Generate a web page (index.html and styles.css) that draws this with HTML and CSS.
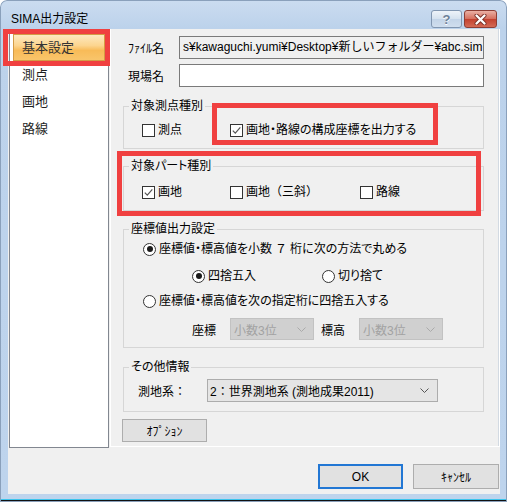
FILE: index.html
```html
<!DOCTYPE html>
<html lang="ja">
<head>
<meta charset="utf-8">
<title>SIMA出力設定</title>
<link rel="stylesheet" href="styles.css">
</head>
<body>
<div class="window">
  <div class="titlebar">
    <span class="title">SIMA出力設定</span>
    <div class="tbtns">
      <span class="tbtn help">?</span>
      <span class="tbtn close"><svg width="15" height="11" viewBox="0 0 15 11"><path d="M3.5 1.5 L11.5 9.5 M11.5 1.5 L3.5 9.5" stroke="#7a3027" stroke-width="4" stroke-linecap="round"/><path d="M3.5 1.5 L11.5 9.5 M11.5 1.5 L3.5 9.5" stroke="#fff" stroke-width="2.3" stroke-linecap="round"/></svg></span>
    </div>
  </div>
  <div class="client">
    <div class="main">
      <ul class="nav">
        <li class="sel">基本設定<span class="mark mark-nav"></span></li>
        <li>測点</li>
        <li>画地</li>
        <li>路線</li>
      </ul>
      <div class="panel">
        <div class="row"><label>ﾌｧｲﾙ名</label><div class="input ro">s¥kawaguchi.yumi¥Desktop¥新しいフォルダー¥abc.sim</div></div>
        <div class="row"><label>現場名</label><div class="input"></div></div>

        <div class="grp g1">
          <div class="gtitle">対象測点種別</div>
          <div class="opts">
            <span class="chk w88"><i class="box"></i>測点</span>
            <span class="chk marked"><i class="box"><svg width="11" height="11" viewBox="0 0 11 11"><polyline points="1.8,5.6 4.3,8.2 9.3,2.4" fill="none" stroke="#555" stroke-width="1.2"/></svg></i>画地・路線の構成座標を出力する<span class="mark mark-chk"></span></span>
          </div>
        </div>

        <div class="grp g2">
          <div class="gtitle">対象パート種別</div>
          <div class="opts">
            <span class="chk w88"><i class="box"><svg width="11" height="11" viewBox="0 0 11 11"><polyline points="1.8,5.6 4.3,8.2 9.3,2.4" fill="none" stroke="#555" stroke-width="1.2"/></svg></i>画地</span>
            <span class="chk w130 full"><i class="box"></i>画地（三斜）</span>
            <span class="chk"><i class="box"></i>路線</span>
          </div>
          <span class="mark mark-grp"></span>
        </div>

        <div class="grp g3">
          <div class="gtitle">座標値出力設定</div>
          <div class="rad"><i class="dot on"></i>座標値・標高値を小数<span class="full">７</span>桁に次の方法で丸める</div>
          <div class="sub">
            <div class="rad w130"><i class="dot on"></i>四捨五入</div>
            <div class="rad"><i class="dot"></i>切り捨て</div>
          </div>
          <div class="rad"><i class="dot"></i>座標値・標高値を次の指定桁に四捨五入する</div>
          <div class="digits">
            <span class="lbl">座標</span>
            <span class="combo dis">小数3位<svg width="9" height="5" viewBox="0 0 9 5"><polyline points="0.5,0.5 4.5,4.5 8.5,0.5" fill="none" stroke="#aaa"/></svg></span>
            <span class="lbl lbl2">標高</span>
            <span class="combo dis">小数3位<svg width="9" height="5" viewBox="0 0 9 5"><polyline points="0.5,0.5 4.5,4.5 8.5,0.5" fill="none" stroke="#aaa"/></svg></span>
          </div>
        </div>

        <div class="grp g4">
          <div class="gtitle">その他情報</div>
          <div class="geo">
            <span class="lbl-geo">測地系：</span>
            <span class="combo norm">2：世界測地系 (測地成果2011)<svg width="9" height="5" viewBox="0 0 9 5"><polyline points="0.5,0.5 4.5,4.5 8.5,0.5" fill="none" stroke="#555"/></svg></span>
          </div>
        </div>

        <div class="btn opt">ｵﾌﾟｼｮﾝ</div>
      </div>
    </div>
    <div class="bottom">
      <div class="btn ok">OK</div>
      <div class="btn cancel">ｷｬﾝｾﾙ</div>
    </div>
  </div>
</div>
</body>
</html>
```

FILE: styles.css
```css
* { box-sizing: border-box; }
html, body { margin: 0; padding: 0; }
body {
  width: 507px;
  height: 502px;
  overflow: hidden;
  font-family: "Liberation Sans", "Noto Sans CJK JP", sans-serif;
  font-size: 12px;
  color: #000;
  background: #fff;
  font-feature-settings: "palt";
}

.window {
  width: 507px;
  height: 502px;
  display: flex;
  flex-direction: column;
  border-radius: 7px 7px 0 0;
  background:
    linear-gradient(to top, #111 0 2px, #3cc4ec 2px 3px, transparent 3px),
    linear-gradient(#cbdcf0, #bcd2eb 28px, #bed4ed);
  box-shadow: inset 0 0 0 1px #8aa0bb;
}

/* title bar */
.titlebar {
  flex: none;
  height: 29px;
  display: flex;
  align-items: flex-start;
  padding: 0 10px 0 11px;
}
.title {
  margin-top: 11px;
  line-height: 16px;
  font-size: 12px;
}
.tbtns {
  margin-left: auto;
  margin-top: 10px;
  display: flex;
  gap: 2px;
}
.tbtn {
  height: 18px;
  border-radius: 3px;
  display: flex;
  align-items: center;
  justify-content: center;
}
.help {
  width: 31px;
  border: 1px solid #8196b1;
  background: linear-gradient(#eef3f9, #d6e2ef 48%, #c3d4e8 52%, #d0deee);
  color: #6d8099;
  font: bold 13px "Liberation Sans", sans-serif;
  text-shadow: 0 1px 0 #fff;
}
.close {
  width: 33px;
  border: 1px solid #8d3d34;
  background: linear-gradient(#eab0a4, #d6705f 48%, #c3412f 52%, #d46a55);
}

/* client */
.client {
  flex: 1;
  margin: 0 7px 8px 8px;
  background: #f0f0f0;
  display: flex;
  flex-direction: column;
}
.main {
  display: flex;
  height: 419px;
}

.nav {
  list-style: none;
  margin: 0 1px;
  padding: 4px 3px 0;
  width: 100px;
  background: #fff;
  border: 1px solid #828790;
  font-size: 13px;
  color: #1e1e1e;
}
.nav li {
  height: 27px;
  line-height: 27px;
  padding-left: 9px;
}
.nav li.sel {
  position: relative;
  border: 1px solid #d49b45;
  line-height: 25px;
  padding-left: 8px;
  color: #333;
  background: linear-gradient(#fde9c0 0%, #fcd58f 42%, #f8bb58 62%, #f9c56b 100%);
}

.mark {
  position: absolute;
  border: 5px solid #f04040;
  pointer-events: none;
}
.mark-nav { left: -11px; top: -6px; width: 107px; height: 37px; }

.panel {
  flex: 1;
  height: 418px;
  border: 1px solid #fff;
  border-top: 0;
  box-shadow: inset -2px 0 0 -1px #d3dae2;
  padding: 7px 15px 0 12px;
}

.row {
  display: flex;
  align-items: center;
  height: 23px;
  padding-left: 5px;
}
.row + .row { margin-top: 5px; }
.row label { width: 51px; flex: none; }
.input {
  flex: 1;
  height: 23px;
  border: 1px solid #7a7a7a;
  background: #fff;
  padding-left: 3px;
  line-height: 21px;
  white-space: nowrap;
  overflow: hidden;
  font-feature-settings: normal;
}
.input.ro { background: #f0f0f0; }

/* groups */
.grp {
  position: relative;
  border: 1px solid #d6d6d6;
}
.gtitle {
  width: fit-content;
  margin: -9px 0 0 5px;
  padding: 0 2px;
  line-height: 16px;
  background: #f0f0f0;
}
.g1 { margin-top: 19px; padding: 0 0 10px 18px; }
.g2 { margin-top: 17px; padding: 0 0 10px 18px; }
.g3 { margin-top: 18px; padding: 0 0 7px 19px; }
.g4 { margin-top: 19px; padding: 0 0 9px 14px; }
.g1 .gtitle, .g2 .gtitle { margin-left: -13px; }
.g3 .gtitle { margin-left: -14px; }
.g4 .gtitle { margin-left: -9px; }
.g1 .gtitle { margin-bottom: 8px; }
.g2 .gtitle { margin-bottom: 10px; }
.g3 .gtitle, .g4 .gtitle { margin-bottom: 4px; }

.mark-grp { left: -7px; top: -16px; width: 364px; height: 65px; }

.full { font-feature-settings: normal; }

.opts { display: flex; height: 16px; }
.chk {
  position: relative;
  display: inline-flex;
  align-items: center;
  gap: 3px;
  height: 16px;
  line-height: 16px;
  white-space: nowrap;
}
.w88 { width: 88px; flex: none; }
.w130 { width: 130px; flex: none; }
.box {
  width: 13px;
  height: 13px;
  border: 1px solid #333;
  background: #fff;
  flex: none;
  display: flex;
}
.mark-chk { left: -18px; top: -19px; width: 226px; height: 42px; }

.rad {
  display: flex;
  align-items: center;
  gap: 3px;
  height: 16px;
  line-height: 16px;
  white-space: nowrap;
}
.dot {
  width: 13px;
  height: 13px;
  border: 1px solid #333;
  border-radius: 50%;
  background: #fff;
  flex: none;
  display: flex;
  align-items: center;
  justify-content: center;
}
.dot.on::after {
  content: "";
  width: 6px;
  height: 6px;
  border-radius: 50%;
  background: #1a1a1a;
}
.sub {
  display: flex;
  margin: 11px 0 9px 49px;
}
.digits {
  display: flex;
  align-items: center;
  margin: 9px 0 0 49px;
  height: 22px;
}
.lbl { width: 38px; flex: none; }
.lbl2 { margin-left: 7px; }

.combo {
  display: flex;
  align-items: center;
  justify-content: space-between;
  white-space: nowrap;
  flex: none;
}
.combo.dis {
  width: 84px;
  height: 22px;
  border: 1px solid #c2c2c2;
  background: #d0d0d0;
  color: #a2a2a2;
  padding: 0 7px 0 3px;
}
.combo.norm {
  width: 231px;
  height: 23px;
  border: 1px solid #acacac;
  background: #e5e5e5;
  padding: 0 8px 0 2px;
}

.geo { display: flex; align-items: center; font-feature-settings: normal; }
.lbl-geo { width: 69px; flex: none; }

/* buttons */
.btn {
  display: flex;
  align-items: center;
  justify-content: center;
  background: #e1e1e1;
  border: 1px solid #adadad;
}
.opt {
  width: 85px;
  height: 23px;
  margin: 7px 0 0 -1px;
}
.bottom {
  flex: 1;
  display: flex;
  justify-content: flex-end;
  align-items: flex-start;
  gap: 10px;
  padding: 16px 1px 0 0;
}
.ok {
  width: 85px;
  height: 25px;
  border: 2px solid #2277d4;
}
.cancel {
  width: 86px;
  height: 25px;
}
```
